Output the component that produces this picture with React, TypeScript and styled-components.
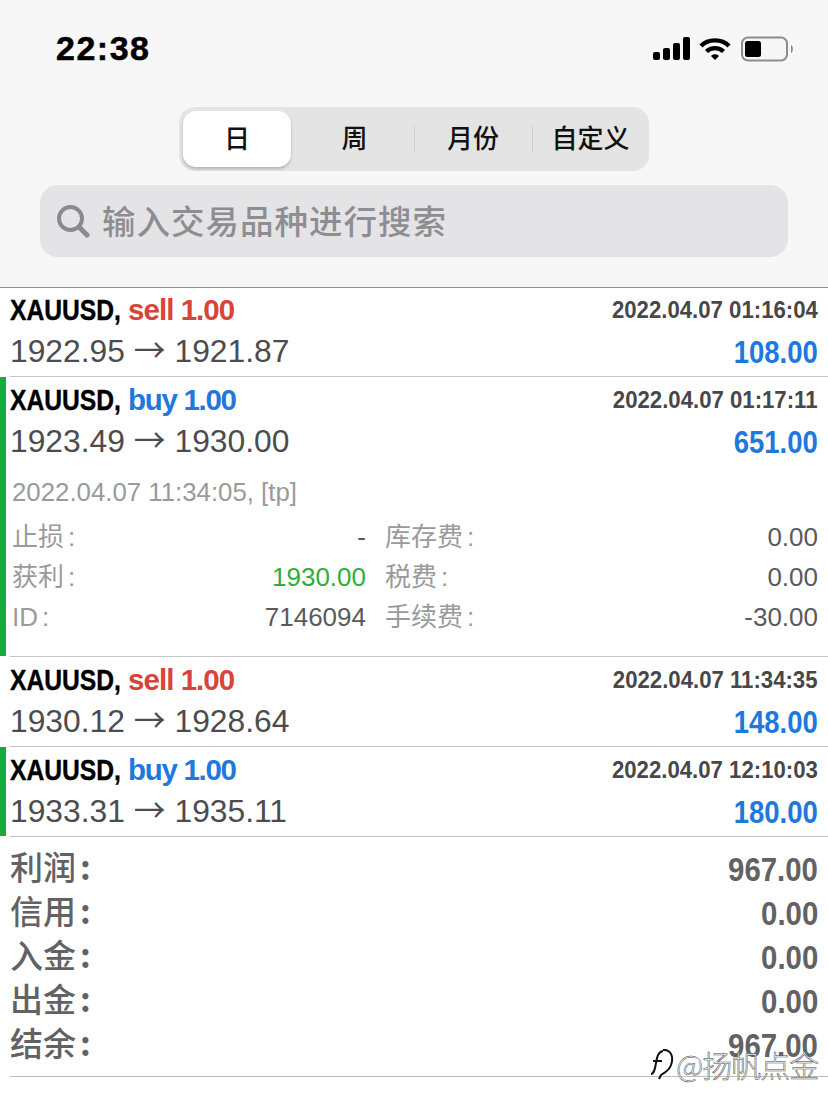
import React from "react";
import styled, { createGlobalStyle } from "styled-components";

const Global = createGlobalStyle`
  html, body { margin: 0; padding: 0; background: #fff; }
  body { font-family: "Liberation Sans", "Noto Sans CJK SC", sans-serif; }
`;
const Page = styled.div`width: 828px; height: 1112px; overflow: hidden; background: #fff; position: relative;`;
const Header = styled.header`height: 288px; box-sizing: border-box; background: #f7f7f7; border-bottom: 1px solid #8e8e8e; display: flex; flex-direction: column;`;
const StatusBar = styled.div`height: 107px; box-sizing: border-box; padding: 31px 33px 0 56px; display: flex; justify-content: space-between; align-items: flex-start;`;
const Time = styled.div`font-weight: 700; font-size: 34px; line-height: 34px; color: #000; letter-spacing: 1.5px; -webkit-text-stroke: .5px #000;`;
const StatusIcons = styled.div`display: flex; align-items: center; height: 36px;`;
const Segments = styled.div`align-self: center; width: 470px; height: 64px; box-sizing: border-box; background: #e4e4e5; border-radius: 16px; padding: 4px; display: flex; align-items: stretch;`;
const Segment = styled.div<{ $active?: boolean; $divider?: boolean; $w: number }>`
  width: ${p => p.$w}px; flex: 0 0 auto; box-sizing: border-box; padding-bottom: 5px; display: flex; align-items: center; justify-content: center;
  margin-right: ${p => (p.$active ? "4px" : "0")};
  font-size: 26px; font-family: "Noto Sans CJK SC", sans-serif; font-weight: 500; color: #111;
  background: ${p => (p.$active ? "#fff" : "transparent")};
  border-radius: ${p => (p.$active ? "13px" : "0")};
  box-shadow: ${p => (p.$active ? "0 2px 3px rgba(0,0,0,.22)" : "none")};
  position: relative;
  &::before { content: ""; display: ${p => (p.$divider ? "block" : "none")}; position: absolute; left: 0; top: 15px; bottom: 15px; width: 1px; background: #cfcfcf; }
`;
const Search = styled.div`margin: 14px 40px 0; height: 72px; background: #e4e4e6; border-radius: 18px; display: flex; align-items: center; padding-left: 16px; gap: 12px;`;
const Placeholder = styled.span`font-size: 33.5px; padding-bottom: 4px; font-family: "Noto Sans CJK SC", sans-serif; font-weight: 500; color: #8e8e92; letter-spacing: 1px;`;
const Row = styled.section<{ $buy?: boolean; $first?: boolean }>`
  position: relative; box-sizing: border-box; padding: ${p => (p.$first ? 0 : 1)}px 10px 7px;
  &::before { content: ""; display: ${p => (p.$buy ? "block" : "none")}; position: absolute; left: 0; top: 0; bottom: 1px; width: 6px; background: #16ab3a; }
  &::after { content: ""; position: absolute; left: 10px; right: 0; bottom: 0; height: 1px; background: #c4c4c4; }
`;
const Line = styled.div<{ $h: number }>`height: ${p => p.$h}px; display: flex; justify-content: space-between; align-items: center;`;
const Left = styled.div`display: flex; align-items: center; white-space: nowrap;`;
const Symbol = styled.span`display: inline-block; width: 118px; font-size: 29.5px; font-weight: 700; color: #000; -webkit-text-stroke: .4px #000; transform: scaleX(.835); transform-origin: left center;`;
const Side = styled.span<{ $buy?: boolean }>`font-size: 29.5px; font-weight: 700; letter-spacing: ${p => (p.$buy ? "-1.3px" : "-.95px")}; color: ${p => (p.$buy ? "#1f78dc" : "#d8443a")};`;
const Stamp = styled.span`display: block; font-size: 24px; font-weight: 700; color: #47474a; transform: scaleX(.924); transform-origin: right center; white-space: nowrap;`;
const Prices = styled.span`display: block; font-size: 31.8px; line-height: 38px; color: #4c4c4e; white-space: nowrap;`;
const Arrow = styled.span`font-family: "Noto Sans CJK SC", sans-serif; font-weight: 400; line-height: 0;`;
const Profit = styled.span`display: block; padding-top: 2px; font-size: 32px; font-weight: 700; color: #1f78dc; transform: scaleX(.86); transform-origin: right center;`;
const Details = styled.div`height: 190px; box-sizing: border-box; padding: 17px 0 0 2px;`;
const Closed = styled.div`font-size: 25.8px; line-height: 30px; color: #9a9a9c; margin-bottom: 10px;`;
const Grid = styled.div`display: grid; grid-template-columns: 354px 375px 1fr; grid-auto-rows: 40px; width: 806px;`;
const DetailCell = styled.div`display: flex; justify-content: space-between; align-items: center; font-size: 26px; color: #9a9a9c; white-space: nowrap;`;
const DetailLabel = styled.span`padding-bottom: 6px;`;
const Colon = styled.span`margin-left: 4px;`;
const Value = styled.span<{ $green?: boolean }>`color: ${p => (p.$green ? "#2fae3a" : "#5a5a5c")};`;
const ValueOnly = styled.div`display: flex; justify-content: flex-end; align-items: center; font-size: 26px; color: #5a5a5c;`;
const Third = styled.div`display: flex; align-items: center; padding-left: 19px; font-size: 26px; color: #9a9a9c;`;
const Summary = styled.div`height: 240px; box-sizing: border-box; margin-left: 10px; padding: 11px 10px 0 0; border-bottom: 1px solid #bdbdbd;`;
const SummaryRow = styled.div`height: 44px; display: flex; justify-content: space-between; align-items: center; color: #626264; font-weight: 700;`;
const SummaryLabel = styled.span`font-size: 33px; padding-bottom: 8px; font-family: "Noto Sans CJK SC", sans-serif; font-weight: 500; display: flex; align-items: center;`;
const SummaryColon = styled.span`margin-left: 4px; font-weight: 700;`;
const SummaryValue = styled.span`display: block; font-size: 33px; transform: scaleX(.89); transform-origin: right center;`;
const Watermark = styled.div`position: absolute; left: 648px; top: 1044px; display: flex; align-items: center; gap: 2px; font-size: 30px; font-family: "Noto Sans CJK SC", sans-serif; font-weight: 300; color: #fff; -webkit-text-stroke: .5px #444; white-space: nowrap; line-height: 40px; letter-spacing: -1px;`;

const trades = [
  { side: "sell", open: "1922.95", close: "1921.87", time: "2022.04.07 01:16:04", profit: "108.00" },
  { side: "buy", open: "1923.49", close: "1930.00", time: "2022.04.07 01:17:11", profit: "651.00", details: true },
  { side: "sell", open: "1930.12", close: "1928.64", time: "2022.04.07 11:34:35", profit: "148.00" },
  { side: "buy", open: "1933.31", close: "1935.11", time: "2022.04.07 12:10:03", profit: "180.00" },
];
const summary = [["利润", "967.00"], ["信用", "0.00"], ["入金", "0.00"], ["出金", "0.00"], ["结余", "967.00"]];

export default function App() {
  return (
    <Page>
      <Global />
      <Header>
        <StatusBar>
          <Time>22:38</Time>
          <StatusIcons>
            <svg width="38" height="24" viewBox="0 0 38 24" fill="#000"><rect x="0" y="15" width="7" height="8" rx="2"/><rect x="10" y="11" width="7" height="12" rx="2"/><rect x="20" y="6" width="7" height="17" rx="2"/><rect x="30" y="0" width="7" height="23" rx="2"/></svg>
            <svg style={{ marginLeft: 8 }} width="32" height="24" viewBox="0 0 32 24" fill="none" stroke="#000" strokeWidth="4.4"><path d="M2 9 C 9 1.5 23 1.5 30 9"/><path d="M7.5 14.5 C 12 10 20 10 24.5 14.5"/><path d="M12 19 L 16 23 L 20 19 C 18 16.6 14 16.6 12 19Z" fill="#000" stroke="none"/></svg>
            <svg style={{ marginLeft: 10 }} width="54" height="26" viewBox="0 0 54 26" fill="none"><rect x="1" y="1.5" width="45" height="23" rx="6" stroke="#8d8d8d" strokeWidth="2"/><rect x="4" y="5" width="16" height="16" rx="2.5" fill="#000"/><path d="M50 9 C 52.5 10 52.5 16 50 17Z" fill="#8d8d8d"/></svg>
          </StatusIcons>
        </StatusBar>
        <Segments>
          <Segment $active $w={108}>日</Segment>
          <Segment $w={119}>周</Segment>
          <Segment $divider $w={118}>月份</Segment>
          <Segment $divider $w={117}>自定义</Segment>
        </Segments>
        <Search>
          <svg width="34" height="34" viewBox="0 0 34 34" fill="none" stroke="#8a8a8e" strokeWidth="4"><circle cx="14.5" cy="14.5" r="11.5"/><path d="M23 23 L31 31" strokeWidth="5" strokeLinecap="round"/></svg>
          <Placeholder>输入交易品种进行搜索</Placeholder>
        </Search>
      </Header>
      {trades.map((t, i) => {
        const buy = t.side === "buy";
        return (
          <Row key={t.time} $buy={buy} $first={i === 0}>
            <Line $h={44}>
              <Left><Symbol>XAUUSD,</Symbol><Side $buy={buy}>{t.side} 1.00</Side></Left>
              <Stamp>{t.time}</Stamp>
            </Line>
            <Line $h={38}>
              <Prices>{t.open} <Arrow>→</Arrow> {t.close}</Prices>
              <Profit>{t.profit}</Profit>
            </Line>
            {t.details && (
              <Details>
                <Closed>2022.04.07 11:34:05, [tp]</Closed>
                <Grid>
                  <DetailCell><DetailLabel>止损<Colon>:</Colon></DetailLabel><Value>-</Value></DetailCell>
                  <Third><DetailLabel>库存费<Colon>:</Colon></DetailLabel></Third><ValueOnly>0.00</ValueOnly>
                  <DetailCell><DetailLabel>获利<Colon>:</Colon></DetailLabel><Value $green>1930.00</Value></DetailCell>
                  <Third><DetailLabel>税费<Colon>:</Colon></DetailLabel></Third><ValueOnly>0.00</ValueOnly>
                  <DetailCell><span>ID<Colon>:</Colon></span><Value>7146094</Value></DetailCell>
                  <Third><DetailLabel>手续费<Colon>:</Colon></DetailLabel></Third><ValueOnly>-30.00</ValueOnly>
                </Grid>
              </Details>
            )}
          </Row>
        );
      })}
      <Summary>
        {summary.map(([l, v], i) => (
          <SummaryRow key={i}><SummaryLabel>{l}<SummaryColon>:</SummaryColon></SummaryLabel><SummaryValue>{v}</SummaryValue></SummaryRow>
        ))}
      </Summary>
      <Watermark>
        <svg width="26" height="34" viewBox="0 0 26 34" fill="none" stroke="#111" strokeWidth="2"><path d="M3 27 C 6 27 7 22 8 16 C 9 10 10 5 15 4"/><path d="M5 14 H14"/><path d="M15 3 C 23 2 26 10 23 18 C 21 24 16 26 13 28 L 11 32"/></svg>
        <span>@扬帆点金</span>
      </Watermark>
    </Page>
  );
}
